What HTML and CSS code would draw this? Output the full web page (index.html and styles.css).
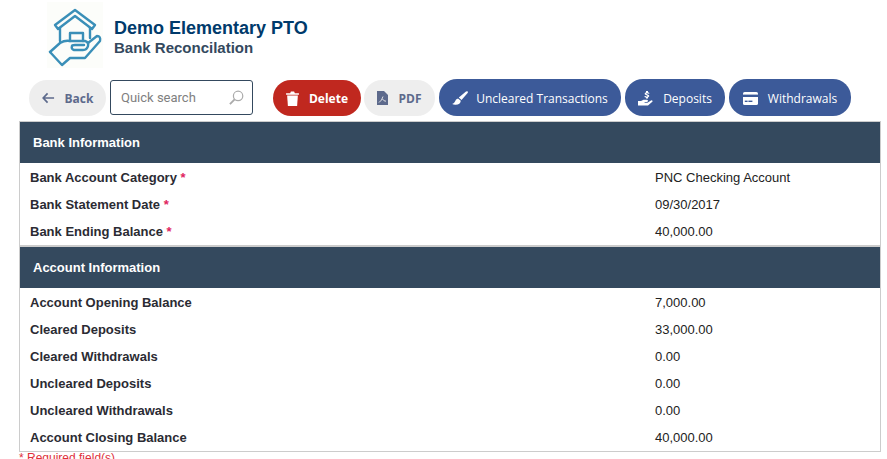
FILE: index.html
```html
<!DOCTYPE html>
<html lang="en">
<head>
    <meta charset="UTF-8">
    <meta name="viewport" content="width=device-width, initial-scale=1.0">
    <title>Bank Reconcilation - Demo Elementary PTO</title>
    <link rel="stylesheet" href="styles.css">
</head>
<body>
    <div class="page-header">
        <div class="logo">
            <svg viewBox="47 2 56 66" width="56" height="66" fill="none" stroke="#3a8fb8" stroke-width="2.4" stroke-linejoin="round" stroke-linecap="round">
                <path d="M55 25 L75 10 L95 25 L92 29 L75 16 L58 29 Z"/>
                <path d="M60 28 V41 M90 28 V38"/>
                <path d="M70 41 V33 H83 V41"/>
                <path d="M50 52 L60 43 Q65 40 70 41 H85 Q89 42 88 46 Q87 50 83 50 H74 Q71 49 72 46 Q72 45 75 45 H84"/>
                <path d="M50 52 L62 65 L70 58 H85 L100 41 Q101 36 97 36 L88 43"/>
            </svg>
        </div>
        <div class="titles">
            <h1>Demo Elementary PTO</h1>
            <h2>Bank Reconcilation</h2>
        </div>
    </div>

    <div class="toolbar">
        <a class="btn btn-grey btn-back" href="#">
            <svg viewBox="0 0 14 12" width="13" height="12" fill="none" stroke="currentColor" stroke-width="1.8"><path d="M6 1 L1.3 6 L6 11 M1.5 6 H13"/></svg>
            Back
        </a>
        <div class="search">
            <span>Quick search</span>
            <svg viewBox="0 0 16 16" width="15" height="15" fill="none" stroke="#aaa" stroke-width="1.3"><circle cx="9.7" cy="6.3" r="5"/><path d="M6 10 L1 15" stroke-width="2"/></svg>
        </div>
        <a class="btn btn-red btn-delete" href="#">
            <svg viewBox="0 0 12 14" width="13" height="15" fill="#fff"><path d="M0 2 H3.8 L4.5 .5 H7.5 L8.2 2 H12 V3.4 H0 Z"/><path d="M1 4.3 H11 L10.3 14 H1.7 Z"/></svg>
            Delete
        </a>
        <a class="btn btn-grey btn-pdf" href="#">
            <svg viewBox="0 0 11 14" width="11" height="14" fill="currentColor"><path d="M0 0 H7 L11 4 V14 H0 Z"/><path d="M2 11.5 Q5 9.5 6 5.5 M5.5 8 Q7 10.5 9 10.2" fill="none" stroke="#eee" stroke-width=".9"/></svg>
            PDF
        </a>
        <a class="btn btn-blue btn-uncleared" href="#">
            <svg viewBox="0 0 16 14" width="16" height="14" fill="#fff"><path d="M15.5 .3 Q16.2 1 15.6 2 L9.5 9 L6.8 6.6 L14 .6 Q15 0 15.5 .3 Z"/><path d="M6 7.4 L8.8 9.8 Q8.4 13.6 3.6 13.8 Q1.4 13.9 .2 13 Q2.4 12.6 3 10.6 Q3.6 8 6 7.4 Z"/></svg>
            Uncleared Transactions
        </a>
        <a class="btn btn-blue btn-deposits" href="#">
            <svg viewBox="0 0 15 15" width="15" height="15" fill="#fff"><path d="M8 0 H10 V1.2 Q11.4 1.4 11.6 2.4 L10.4 2.8 Q9.8 2.2 8.8 2.3 Q7.8 2.5 8.6 3.1 L10.6 4 Q12.2 5.2 10 6.5 V7.6 H8 V6.6 Q6.6 6.4 6.3 5.3 L7.6 4.9 Q8.2 5.6 9.3 5.4 Q10 5 9 4.5 L7.4 3.8 Q5.6 2.5 8 1.2 Z"/><path d="M0 10 H3 L5.5 8.7 H9 Q10.2 9 10 10.1 Q9.8 11 8.6 11 H6.6 V11.7 H9.4 L13 9.4 Q14.6 9.2 14.6 10.4 L10 14.4 H0 Z"/></svg>
            Deposits
        </a>
        <a class="btn btn-blue btn-withdrawals" href="#">
            <svg viewBox="0 0 15 13" width="15" height="13"><rect width="15" height="13" rx="1.6" fill="#fff"/><rect y="2.6" width="15" height="2.4" fill="#3c5a99"/><rect x="1.8" y="8.6" width="2.8" height="1.4" fill="#3c5a99"/><rect x="5.4" y="8.6" width="4" height="1.4" fill="#3c5a99"/></svg>
            Withdrawals
        </a>
    </div>

    <div class="panel">
        <div class="section-title section-first">Bank Information</div>
        <div class="rows">
            <div class="row"><label>Bank Account Category <span class="req">*</span></label><span>PNC Checking Account</span></div>
            <div class="row"><label>Bank Statement Date <span class="req">*</span></label><span>09/30/2017</span></div>
            <div class="row"><label>Bank Ending Balance <span class="req">*</span></label><span>40,000.00</span></div>
        </div>
        <div class="section-title">Account Information</div>
        <div class="rows">
            <div class="row"><label>Account Opening Balance</label><span>7,000.00</span></div>
            <div class="row"><label>Cleared Deposits</label><span>33,000.00</span></div>
            <div class="row"><label>Cleared Withdrawals</label><span>0.00</span></div>
            <div class="row"><label>Uncleared Deposits</label><span>0.00</span></div>
            <div class="row"><label>Uncleared Withdrawals</label><span>0.00</span></div>
            <div class="row"><label>Account Closing Balance</label><span>40,000.00</span></div>
        </div>
    </div>
    <div class="required-note">* Required field(s)</div>
</body>
</html>
```

FILE: styles.css
```css
html, body {
    height: 459px;
    overflow: hidden;
}

body {
    font-family: 'Liberation Sans', Arial, sans-serif;
    background-color: #fff;
    color: #222;
    margin: 0;
    padding: 0 6px 0 19px;
    font-size: 13px;
}

.page-header {
    display: flex;
    align-items: flex-start;
    gap: 11px;
    box-sizing: border-box;
    height: 79px;
    padding: 2px 0 0 28px;
}

.logo {
    width: 56px;
    height: 66px;
    flex-shrink: 0;
    background-color: #fcfdfa;
}

.logo svg {
    display: block;
}

.titles {
    padding-top: 16px;
}

.titles h1 {
    margin: 0;
    font-size: 18px;
    line-height: 21px;
    color: #003a6b;
}

.titles h2 {
    margin: 0;
    font-size: 15px;
    line-height: 17px;
    color: #34495e;
}

.toolbar {
    display: flex;
    align-items: center;
    height: 37px;
    padding-left: 10px;
    margin-bottom: 5px;
    gap: 4px;
}

.btn {
    display: flex;
    align-items: center;
    justify-content: center;
    box-sizing: border-box;
    font-family: 'Open Sans', sans-serif;
    text-decoration: none;
    border-radius: 18px;
    height: 36px;
    padding-top: 1px;
    flex-shrink: 0;
    white-space: nowrap;
}

.btn-grey {
    background-color: #eee;
    color: #5d6a8c;
    font-weight: 700;
    font-size: 12px;
}

.btn-red {
    background-color: #c0281f;
    color: #fff;
    font-weight: 700;
    font-size: 12px;
}

.btn-blue {
    background-color: #3c5a99;
    color: #fff;
    font-size: 12px;
    height: 37px;
}

.btn-back { width: 77px; gap: 10px; }
.btn-delete { width: 88px; gap: 10px; margin-left: 16px; margin-right: -1px; }
.btn-pdf { width: 71px; gap: 10px; }
.btn-uncleared { width: 182px; gap: 8px; }
.btn-deposits { width: 100px; gap: 10px; }
.btn-withdrawals { width: 122px; gap: 10px; }

.search {
    display: flex;
    align-items: center;
    justify-content: space-between;
    box-sizing: border-box;
    width: 143px;
    height: 35px;
    padding: 0 8px 0 10px;
    border: 1px solid #34495e;
    border-radius: 3px;
    font-family: Roboto, sans-serif;
    font-size: 13px;
    color: #808080;
}

.panel {
    border: 1px solid #ccc;
    box-sizing: border-box;
    width: 862px;
    height: 331px;
}

.section-title {
    background-color: #34495e;
    color: #fff;
    font-weight: 700;
    font-size: 13px;
    height: 41px;
    line-height: 41px;
    padding-left: 13px;
    border-top: 2px solid #ccc;
    margin-bottom: 1px;
}

.section-first {
    border-top: none;
}

.rows {
    background-color: #fff;
}

.row {
    display: grid;
    grid-template-columns: 635px 1fr;
    height: 27px;
    line-height: 27px;
}

.row label {
    padding-left: 10px;
    font-weight: 700;
    color: #2b2b33;
}

.req {
    color: #e0245e;
}

.required-note {
    color: #e0303a;
    font-size: 12px;
    line-height: 13px;
}
```
